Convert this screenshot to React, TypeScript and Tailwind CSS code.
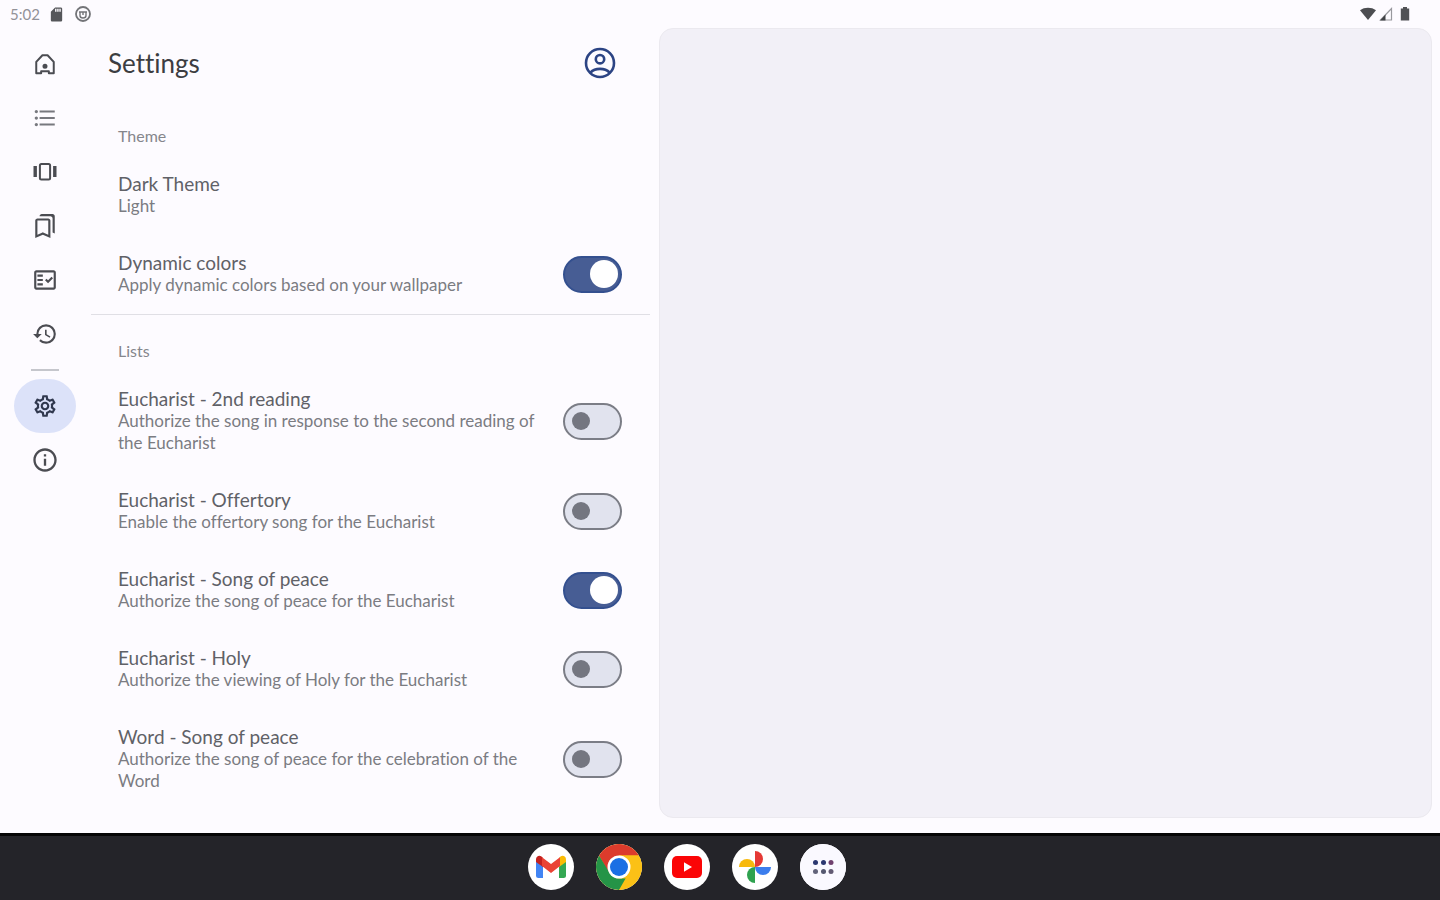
import { useId, useState, type ReactNode } from "react";
import {
  MdFormatListBulleted,
  MdHistory,
  MdOutlineBookmarks,
  MdOutlineFactCheck,
  MdOutlineInfo,
  MdOutlineSettings,
  MdSdCard,
} from "react-icons/md";

function HomeIcon() {
  return (
    <svg viewBox="0 0 24 24" className="size-7" fill="none" stroke="currentColor" strokeWidth="1.7" aria-hidden="true">
      <path d="M4.5 20V10.2L9.8 4.5h4.4l5.3 5.7V20h-4.2v-1.8H8.7V20z" strokeLinejoin="round" />
      <circle cx="12" cy="14" r="1.3" fill="currentColor" />
    </svg>
  );
}

function CarouselIcon() {
  return (
    <svg viewBox="0 0 28 28" className="size-7" fill="none" stroke="currentColor" aria-hidden="true">
      <rect x="8.900" y="6" width="10.200" height="15.500" rx="1.500" strokeWidth="2" />
      <path d="M4.200 8v11M23.800 8v11" strokeWidth="3.400" />
    </svg>
  );
}

function AccountIcon() {
  return (
    <svg viewBox="0 0 36 36" className="size-9" fill="none" stroke="#2c4484" strokeWidth="2.6" aria-hidden="true">
      <circle cx="18" cy="18" r="14" />
      <circle cx="18" cy="14.2" r="4.2" />
      <path d="M8.5 27.5C13 22.6 23 22.6 27.5 27.5" />
    </svg>
  );
}

function RailItem({ label, active = false, children }: { label: string; active?: boolean; children: ReactNode }) {
  return (
    <button
      type="button"
      aria-label={label}
      aria-current={active ? "page" : undefined}
      className={
        active
          ? "flex h-[54px] w-[62px] items-center justify-center rounded-full bg-[#dce2f9] text-[#30384e]"
          : "flex h-[54px] w-[62px] items-center justify-center rounded-full text-[#4b4c52]"
      }
    >
      {children}
    </button>
  );
}

function SectionTitle({ children }: { children: ReactNode }) {
  return <h2 className="px-[27px] pt-[25px] pb-[9px] text-base leading-[22px] text-[#85868c]">{children}</h2>;
}

function RowText({ title, summary }: { title: string; summary: string }) {
  return (
    <>
      <span className="block text-[19px] leading-[22px] text-[#606167]">{title}</span>
      <span className="block text-[17px] leading-[22px] text-[#7b7c82]">{summary}</span>
    </>
  );
}

function SwitchRow({ title, summary, initial = false }: { title: string; summary: string; initial?: boolean }) {
  const id = useId();
  const [on, setOn] = useState(initial);
  return (
    <div className="flex items-center gap-5 pt-[17px] pr-[28px] pb-[18px] pl-[27px]">
      <label htmlFor={id} className="min-w-0 flex-1">
        <RowText title={title} summary={summary} />
      </label>
      <input
        id={id}
        type="checkbox"
        role="switch"
        checked={on}
        onChange={(e) => setOn(e.target.checked)}
        className="flex h-[37px] w-[59px] shrink-0 appearance-none items-center rounded-full border-2 border-[#7b7d86] bg-[#e1e3ee] px-[7px] before:block before:size-[18px] before:rounded-full before:bg-[#747680] checked:justify-end checked:border-[#34508f] checked:bg-[#475d94] checked:px-[2px] checked:before:size-7 checked:before:bg-white"
      />
    </div>
  );
}

function DockApp({ label, children }: { label: string; children: ReactNode }) {
  return (
    <button type="button" aria-label={label} className="flex size-[46px] items-center justify-center overflow-hidden rounded-full bg-white">
      {children}
    </button>
  );
}

function StatusBar() {
  return (
    <header className="flex h-7 items-center justify-between pr-[28px] pl-[10px] text-[#55565a]">
      <div className="flex items-center">
        <span className="w-[38px] text-[15px] leading-5 text-[#929298]">5:02</span>
        <MdSdCard className="size-[17px]" aria-hidden="true" />
        <svg viewBox="0 0 18 18" className="ml-[9px] size-[18px]" fill="none" stroke="#737478" strokeWidth="1.8" aria-hidden="true">
          <circle cx="9" cy="9" r="7" />
          <path d="M5 7h8M6 7v3.5c0 1.4 1.2 2.5 3 2.5s3-1.1 3-2.5V7M9 7v3" strokeWidth="1.4" />
        </svg>
      </div>
      <div className="flex items-center gap-[2px]">
        <svg viewBox="0 0 18 16" className="h-4 w-[18px]" aria-hidden="true">
          <path d="M1 4.2C5.5.9 12.5.9 17 4.2L9 14z" fill="#4c4d51" />
        </svg>
        <svg viewBox="0 0 14 16" className="h-4 w-[14px]" aria-hidden="true">
          <path d="M1.5 14 12.5 2.5V14z" fill="none" stroke="#99999e" strokeWidth="1.2" />
          <path d="M1 14.5 6.5 8.5v6z" fill="#414246" />
        </svg>
        <svg viewBox="0 0 14 16" className="ml-[3px] h-4 w-[14px]" aria-hidden="true">
          <path d="M5 1h4v1.6h2.2v12H2.8v-12H5z" fill="#505155" />
        </svg>
      </div>
    </header>
  );
}

export default function App() {
  return (
    <div className="flex min-h-screen flex-col bg-[#fdfbff] font-['Lato',sans-serif] [font-variant-ligatures:none]">
      <StatusBar />
      <div className="grid flex-1 grid-cols-[91px_minmax(0,568fr)_minmax(0,781fr)]">
        <nav aria-label="Main" className="flex flex-col items-center pt-[9px] pr-px">
          <RailItem label="Home">
            <HomeIcon />
          </RailItem>
          <RailItem label="Songs">
            <MdFormatListBulleted className="size-[26px] text-[#77787e]" />
          </RailItem>
          <RailItem label="Stories">
            <CarouselIcon />
          </RailItem>
          <RailItem label="Bookmarks">
            <MdOutlineBookmarks className="size-[26px]" />
          </RailItem>
          <RailItem label="Checklist">
            <MdOutlineFactCheck className="size-[26px]" />
          </RailItem>
          <RailItem label="History">
            <MdHistory className="size-[26px]" />
          </RailItem>
          <hr className="my-2 w-7 border-t-2 border-[#c5c6cc]" />
          <RailItem label="Settings" active>
            <MdOutlineSettings className="size-[26px]" />
          </RailItem>
          <RailItem label="About">
            <MdOutlineInfo className="size-7" />
          </RailItem>
        </nav>

        <main className="pr-[9px]">
          <div className="flex h-[72px] items-center justify-between pr-[32px] pb-[2px] pl-[17px]">
            <h1 className="text-[26px] leading-8 text-[#3c3d41]">Settings</h1>
            <button type="button" aria-label="Account">
              <AccountIcon />
            </button>
          </div>
          <section>
            <SectionTitle>Theme</SectionTitle>
            <button type="button" className="block w-full px-[27px] pt-[17px] pb-[18px] text-left">
              <RowText title="Dark Theme" summary="Light" />
            </button>
            <SwitchRow title="Dynamic colors" summary="Apply dynamic colors based on your wallpaper" initial />
          </section>
          <section className="border-t border-[#e0dfe5]">
            <SectionTitle>Lists</SectionTitle>
            <SwitchRow title="Eucharist - 2nd reading" summary="Authorize the song in response to the second reading of the Eucharist" />
            <SwitchRow title="Eucharist - Offertory" summary="Enable the offertory song for the Eucharist" />
            <SwitchRow title="Eucharist - Song of peace" summary="Authorize the song of peace for the Eucharist" initial />
            <SwitchRow title="Eucharist - Holy" summary="Authorize the viewing of Holy for the Eucharist" />
            <SwitchRow title="Word - Song of peace" summary="Authorize the song of peace for the celebration of the Word" />
          </section>
        </main>

        <aside aria-label="Details" className="mr-2 mb-[15px] rounded-[14px] border border-[#ebe9ef] bg-[#f2f0f7]" />
      </div>

      <footer className="flex h-[67px] items-center justify-center gap-[22px] border-t-[3px] border-[#050506] bg-[#242429] pr-[67px] pb-[3px]">
        <DockApp label="Gmail">
          <svg viewBox="0 0 46 46" className="size-full" aria-hidden="true">
            <path d="M8 16v15.5q0 2.5 2.5 2.5H15V20z" fill="#4285f4" />
            <path d="M31 20v14h4.5q2.5 0 2.5-2.5V16z" fill="#34a853" />
            <path d="M31 14v9l7-5v-2.5c0-3.500-3.5-4.500-5.5-3z" fill="#fbbc04" />
            <path d="M15 14v9l-7-5v-2.5c0-3.500 3.5-4.500 5.5-3z" fill="#c5221f" />
            <path d="M14 13.200 23 20l9-6.800V22l-9 7-9-7z" fill="#ea4335" />
          </svg>
        </DockApp>
        <DockApp label="Chrome">
          <svg viewBox="0 0 46 46" className="size-full" aria-hidden="true">
            <circle cx="23" cy="23" r="23" fill="#fbc116" />
            <path d="M3 11.5A23 23 0 0 1 43 11.5H23L13 29z" fill="#dc3b2c" />
            <path d="M3 11.5 13.4 28.5Q17 34 23 34.500h10L23 46A23 23 0 0 1 3 11.500z" fill="#259447" />
            <path d="M33 28.5 23 46A23 23 0 0 0 43 11.5H23z" fill="#fbc116" />
            <circle cx="23" cy="23" r="11.5" fill="#fff" />
            <circle cx="23" cy="23" r="9" fill="#1a6fe4" />
          </svg>
        </DockApp>
        <DockApp label="YouTube">
          <svg viewBox="0 0 46 46" className="size-full" aria-hidden="true">
            <rect x="8" y="12" width="30" height="22" rx="5" fill="#fb0506" />
            <path d="M20 18.300v9.400l8-4.700z" fill="#fff" />
          </svg>
        </DockApp>
        <DockApp label="Photos">
          <svg viewBox="0 0 46 46" className="size-full" aria-hidden="true">
            <path d="M23 7a8 8 0 0 1 0 16z" fill="#e53935" />
            <path d="M39 23a8 8 0 0 1-16 0z" fill="#3b7ded" />
            <path d="M23 39a8 8 0 0 1 0-16z" fill="#2fa24f" />
            <path d="M7 23a8 8 0 0 1 16 0z" fill="#f7b90c" />
          </svg>
        </DockApp>
        <DockApp label="All apps">
          <svg viewBox="0 0 46 46" className="size-full" aria-hidden="true">
            <rect width="46" height="46" fill="#faf9ff" />
            <circle cx="15.500" cy="18.5" r="2.500" fill="#2b3770" />
            <circle cx="23.500" cy="18.5" r="2.500" fill="#2b3770" />
            <circle cx="31" cy="18.5" r="2.500" fill="#70416f" />
            <circle cx="15.500" cy="27.5" r="2.500" fill="#62637a" />
            <circle cx="23.500" cy="27.5" r="2.500" fill="#555870" />
            <circle cx="31" cy="27.5" r="2.500" fill="#625a73" />
          </svg>
        </DockApp>
      </footer>
    </div>
  );
}
